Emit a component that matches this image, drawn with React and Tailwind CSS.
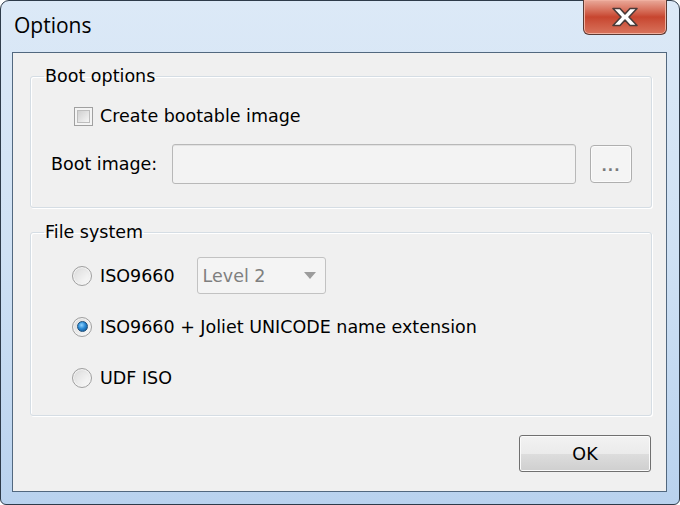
import React from "react";

const FONT = { fontFamily: '"DejaVu Sans", "Liberation Sans", sans-serif' };

function Checkbox() {
  return (
    <div className="w-[19px] h-[19px] border border-[#a0a0a0] bg-[#f4f4f4] p-[2px] shrink-0">
      <div className="w-full h-full border border-[#bdbdbd] bg-gradient-to-br from-[#d0d0d0] to-[#f6f6f6]" />
    </div>
  );
}

function Radio({ checked }) {
  return (
    <div className="w-[20px] h-[20px] rounded-full border border-[#a0a0a0] bg-gradient-to-br from-[#d9d9d9] to-[#fbfbfb] flex items-center justify-center shrink-0 shadow-[inset_0_0_0_1px_#f4f4f4]">
      {checked ? (
        <div className="w-[11px] h-[11px] rounded-full border border-[#1c4f7a] bg-[radial-gradient(circle_at_40%_35%,#8fd4ff_0%,#2a8ad6_45%,#0d4a86_100%)]" />
      ) : (
        <div className="w-[12px] h-[12px] rounded-full bg-gradient-to-br from-[#e0e0e0] to-[#f8f8f8]" />
      )}
    </div>
  );
}

export default function App() {
  return (
    <div className="w-[680px] h-[505px] bg-white overflow-hidden" style={FONT}>
      <div className="w-[680px] h-[505px] rounded-t-[9px] rounded-b-[6px] border border-[#2e3b4a] bg-gradient-to-b from-[#dce9f7] via-[#cfe1f4] to-[#b9d2ee] flex flex-col relative">
        {/* title bar */}
        <div className="h-[51px] flex items-start pl-[13px] pt-[11px]">
          <span className="text-[21px] leading-[27px] text-black" style={{ fontFamily: '"Open Sans", "DejaVu Sans", sans-serif' }}>Options</span>
        </div>
        {/* close button */}
        <div className="absolute top-[-1px] right-[12px] w-[84px] h-[35px] rounded-b-[6px] border border-[#5a3a34] border-t-0 bg-gradient-to-b from-[#e9a99a] via-[#c7452f] to-[#d8735c] flex items-center justify-center shadow-[inset_0_0_0_1px_#f0b0a0]">
          <svg width="32" height="22" viewBox="0 0 32 22">
            <path d="M4 2.5 L11 2.5 L16 8 L21 2.5 L28 2.5 L20 11 L28 19.5 L21 19.5 L16 14 L11 19.5 L4 19.5 L12 11 Z" fill="#ffffff" stroke="#4a3a38" strokeWidth="1.6" strokeLinejoin="round" />
          </svg>
        </div>
        {/* client */}
        <div className="ml-[11px] mr-[12px] h-[440px] border border-[#52687f] bg-[#f0f0f0] flex flex-col">
          {/* Boot options */}
          <fieldset className="mt-[12px] ml-[17px] mr-[14px] border border-[#d5dde4] rounded-[3px] px-[13px] pb-[23px] shadow-[inset_1px_1px_0_#ffffff,1px_1px_0_#ffffff]">
            <legend className="px-[1px] text-[17.5px] leading-[22px] text-black">Boot options</legend>
            <div className="flex items-center gap-[7px] h-[24px] mt-[17px] pl-[30px]">
              <Checkbox />
              <span className="text-[17.5px] leading-[22px] text-black">Create bootable image</span>
            </div>
            <div className="flex items-center mt-[16px] pl-[7px] h-[40px]">
              <span className="text-[17.5px] leading-[22px] text-black w-[121px]">Boot image:</span>
              <div className="w-[404px] h-[40px] border border-[#b8b8b8] rounded-[3px] bg-[#f3f3f3] shadow-[inset_0_1px_0_#e2e2e2]" />
              <div className="ml-[14px] w-[42px] h-[38px] border border-[#afafaf] rounded-[4px] bg-[#f4f4f4] flex items-center justify-center shadow-[inset_0_0_0_1px_#fbfbfb]">
                <span className="text-[14px] leading-[14px] text-[#7a7a7a] tracking-[1px] mt-[4px] font-bold">...</span>
              </div>
            </div>
          </fieldset>
          {/* File system */}
          <fieldset className="mt-[13px] ml-[17px] mr-[14px] border border-[#d5dde4] rounded-[3px] px-[13px] pb-[19px] shadow-[inset_1px_1px_0_#ffffff,1px_1px_0_#ffffff]">
            <legend className="px-[1px] text-[17.5px] leading-[22px] text-black">File system</legend>
            <div className="flex flex-col gap-[14px] mt-[14px] pl-[28px]">
              <div className="flex items-center h-[37px]">
                <Radio />
                <span className="ml-[8px] text-[17.5px] leading-[22px] text-black">ISO9660</span>
                <div className="ml-[22px] w-[129px] h-[37px] border border-[#c2c2c2] rounded-[3px] bg-[#f4f4f4] flex items-center justify-between pl-[5px] pr-[9px]">
                  <span className="text-[17.5px] leading-[22px] text-[#7f7f7f]">Level 2</span>
                  <svg width="12" height="7" viewBox="0 0 12 7"><path d="M0 0 L12 0 L6 7 Z" fill="#9c9c9c" /></svg>
                </div>
              </div>
              <div className="flex items-center h-[37px]">
                <Radio checked />
                <span className="ml-[8px] text-[17.5px] leading-[22px] text-black">ISO9660 + Joliet UNICODE name extension</span>
              </div>
              <div className="flex items-center h-[37px]">
                <Radio />
                <span className="ml-[8px] text-[17.5px] leading-[22px] text-black">UDF ISO</span>
              </div>
            </div>
          </fieldset>
          <div className="flex justify-end mt-[19px] mr-[15px]">
            <div className="w-[132px] h-[37px] border border-[#707070] rounded-[3px] bg-[linear-gradient(to_bottom,#f2f2f2_0%,#ebebeb_50%,#dddddd_51%,#cfcfcf_100%)] shadow-[inset_0_0_0_1px_#fbfbfb] flex items-center justify-center">
              <span className="text-[17.5px] leading-[22px] text-black">OK</span>
            </div>
          </div>
        </div>
      </div>
    </div>
  );
}
